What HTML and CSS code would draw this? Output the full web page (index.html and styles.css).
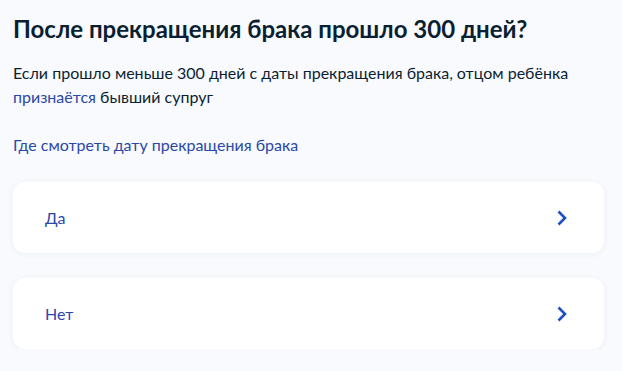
FILE: index.html
```html
<!DOCTYPE html>
<html lang="ru">

<head>
    <meta charset="UTF-8">
    <title>Срок после прекращения брака</title>
    <link rel="stylesheet" href="styles.css">
</head>

<body>
    <div class="page">
        <h1 class="title">После прекращения брака прошло 300 дней?</h1>
        <p class="text">Если прошло меньше 300 дней с даты прекращения брака, отцом ребёнка <a href="#" class="link">признаётся</a> бывший супруг</p>
        <a href="#" class="link help">Где смотреть дату прекращения брака</a>

        <div class="answers">
            <a href="#" class="answer">
                <span>Да</span>
                <svg class="chevron" width="12" height="16" viewBox="0 0 12 16"><path d="M2.5 1.5l6.5 6.5-6.5 6.5" fill="none" stroke="#1d4fc4" stroke-width="2.6" /></svg>
            </a>
            <a href="#" class="answer">
                <span>Нет</span>
                <svg class="chevron" width="12" height="16" viewBox="0 0 12 16"><path d="M2.5 1.5l6.5 6.5-6.5 6.5" fill="none" stroke="#1d4fc4" stroke-width="2.6" /></svg>
            </a>
        </div>
    </div>
</body>

</html>
```

FILE: styles.css
```css
body {
    font-family: Lato, "Noto Sans", sans-serif;
    background-color: #f8fafd;
    color: #0b1f33;
    margin: 0;
    padding: 0;
}

.page {
    padding: 13px 18px 0 13px;
}

.title {
    font-size: 24px;
    line-height: 32px;
    font-weight: 700;
    margin: 0 0 16px;
}

.text {
    font-size: 16px;
    line-height: 24px;
    margin: 0 0 24px;
}

.link {
    color: #2b48a8;
    text-decoration: none;
}

.help {
    display: block;
    font-size: 16px;
    line-height: 24px;
}

.answers {
    display: flex;
    flex-direction: column;
    gap: 25px;
    margin-top: 25px;
}

.answer {
    display: flex;
    justify-content: space-between;
    align-items: center;
    height: 71px;
    padding: 0 36px 0 32px;
    background: #fff;
    border-radius: 12px;
    box-shadow: 0 1px 6px rgba(30, 60, 120, 0.06);
    color: #2b48a8;
    font-size: 16px;
    text-decoration: none;
}
```
